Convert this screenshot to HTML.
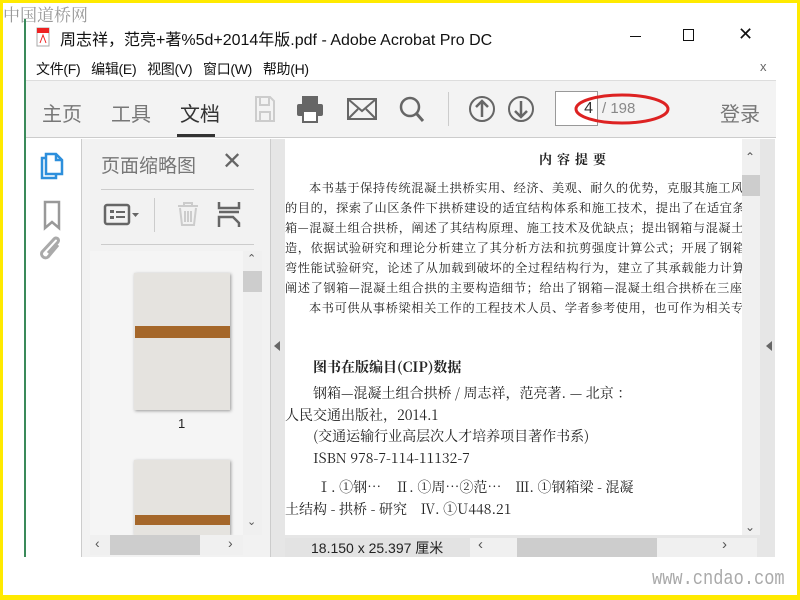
<!DOCTYPE html>
<html><head><meta charset="utf-8"><style>
*{margin:0;padding:0;box-sizing:border-box}
body{width:800px;height:600px;background:#fff;position:relative;overflow:hidden;font-family:"Liberation Sans","Noto Sans CJK SC",sans-serif}
.a{position:absolute}
.cj{font-family:"Noto Serif CJK SC","Liberation Serif",serif;color:#222;white-space:nowrap}
</style></head><body>
<div class="a" style="left:0;top:0;width:800px;height:600px;border:3px solid #ffea00;border-bottom-width:5px"></div>
<div class="a" style="left:3px;top:1px;font-size:17px;color:#999;font-family:'Noto Serif CJK SC',serif">中国道桥网</div>
<div class="a" style="left:24px;top:19px;width:2px;height:538px;background:#3a8a5a"></div>
<svg class="a" style="left:36px;top:27px" width="14" height="20"><rect x="1" y="1" width="12" height="18" fill="#fff" stroke="#aaa"/><rect x="1" y="1" width="12" height="5" fill="#e22"/><path d="M4 16 L7 8 L10 16" stroke="#e22" fill="none"/></svg>
<div class="a" style="left:60px;top:26px;font-size:16px;color:#111">周志祥，范亮+著%5d+2014年版.pdf - Adobe Acrobat Pro DC</div>
<div class="a" style="left:630px;top:36px;width:11px;height:1px;background:#111"></div>
<div class="a" style="left:683px;top:29px;width:11px;height:12px;border:1px solid #111"></div>
<div class="a" style="left:738px;top:24px;font-size:18px;color:#111">✕</div>
<div class="a" style="left:36px;top:59px;font-size:14px;color:#111;letter-spacing:-0.3px">文件(F)&nbsp;&nbsp; 编辑(E)&nbsp;&nbsp; 视图(V)&nbsp;&nbsp; 窗口(W)&nbsp;&nbsp; 帮助(H)</div>
<div class="a" style="left:760px;top:59px;font-size:13px;color:#666">x</div>
<div class="a" style="left:26px;top:80px;width:750px;height:58px;background:#f3f3f3;border-top:1px solid #ddd;border-bottom:1px solid #ccc"></div>
<div class="a" style="left:42px;top:98px;font-size:20px;color:#777">主页</div>
<div class="a" style="left:111px;top:98px;font-size:20px;color:#777">工具</div>
<div class="a" style="left:180px;top:98px;font-size:20px;color:#333">文档</div>
<div class="a" style="left:177px;top:134px;width:38px;height:3px;background:#333"></div>
<svg class="a" style="left:250px;top:95px" width="190" height="30">
<path d="M6 2h14l4 4v20H6z M10 2v8h9V2 M10 26v-9h10v9" fill="none" stroke="#ccc" stroke-width="2"/>
<rect x="52" y="1" width="16" height="8" fill="#666"/><rect x="47" y="9" width="26" height="12" rx="2" fill="#666"/><rect x="53" y="16" width="14" height="11" fill="#fff" stroke="#666" stroke-width="2"/>
<rect x="98" y="4" width="28" height="20" fill="none" stroke="#666" stroke-width="2"/><path d="M98 4l14 12 14-12 M98 24l10-10 M126 24l-10-10" stroke="#666" stroke-width="2" fill="none"/>
<circle cx="160" cy="12" r="9" fill="none" stroke="#666" stroke-width="2.5"/><path d="M166 18l7 8" stroke="#666" stroke-width="3"/>
</svg>
<div class="a" style="left:448px;top:92px;width:1px;height:34px;background:#ccc"></div>
<svg class="a" style="left:468px;top:94px" width="70" height="30"><circle cx="14" cy="15" r="12" fill="none" stroke="#666" stroke-width="2"/><path d="M14 23V8 M8 13l6-6 6 6" stroke="#666" stroke-width="2.5" fill="none"/><circle cx="53" cy="15" r="12" fill="none" stroke="#666" stroke-width="2"/><path d="M53 7v15 M47 17l6 6 6-6" stroke="#666" stroke-width="2.5" fill="none"/></svg>
<div class="a" style="left:555px;top:91px;width:43px;height:35px;background:#fff;border:1px solid #999;font-size:16px;color:#333;text-align:right;padding:8px 4px 0 0">4</div>
<div class="a" style="left:602px;top:100px;font-size:15px;color:#888">/ 198</div>
<svg class="a" style="left:574px;top:92px" width="100" height="36"><ellipse cx="48" cy="17" rx="46" ry="14" fill="none" stroke="#d22" stroke-width="3"/></svg>
<div class="a" style="left:720px;top:98px;font-size:20px;color:#777">登录</div>
<div class="a" style="left:26px;top:139px;width:55px;height:418px;background:#fff"></div>
<svg class="a" style="left:38px;top:152px" width="34" height="120">
<path d="M8 6h-4v20h14v-4 M8 2h10l6 6v14H8z M18 2v6h6" fill="none" stroke="#2d8fdc" stroke-width="2.5"/>
<path d="M7 50h14v26l-7-6-7 6z" fill="none" stroke="#999" stroke-width="2.5"/>
<path d="M20 93l-10 12a4 4 0 0 1-6-5l12-13a2.5 2.5 0 0 1 4 3l-10 11" fill="none" stroke="#aaa" stroke-width="3"/>
</svg>
<div class="a" style="left:81px;top:139px;width:189px;height:418px;background:#f2f2f2;border-left:1px solid #ccc"></div>
<div class="a" style="left:101px;top:151px;font-size:19px;color:#777">页面缩略图</div>
<div class="a" style="left:222px;top:147px;font-size:24px;color:#666">✕</div>
<div class="a" style="left:101px;top:189px;width:153px;height:1px;background:#ccc"></div>
<div class="a" style="left:101px;top:244px;width:153px;height:1px;background:#ccc"></div>
<div class="a" style="left:154px;top:198px;width:1px;height:34px;background:#ccc"></div>
<svg class="a" style="left:102px;top:200px" width="140" height="30"><rect x="3" y="5" width="24" height="19" rx="2" fill="none" stroke="#666" stroke-width="2.5"/><rect x="8" y="10" width="4" height="3" fill="#666"/><rect x="8" y="16" width="4" height="3" fill="#666"/><path d="M14 12h9 M14 17h9" stroke="#666" stroke-width="2"/><path d="M30 13h7l-3.5 4z" fill="#666"/>
<path d="M76 6h20 M82 6V3h8v3 M78 8l2 17h12l2-17 M83 11v11 M86 11v11 M89 11v11" stroke="#ccc" stroke-width="2" fill="none"/>
<path d="M117 2v6h20V2 M117 12h20 M117 27V17h14l6 6v4" stroke="#666" stroke-width="2.5" fill="none"/></svg>
<div class="a" style="left:90px;top:251px;width:153px;height:284px;background:#f5f5f5"></div>
<div class="a" style="left:243px;top:251px;width:19px;height:284px;background:#f0f0f0"></div>
<div class="a" style="left:243px;top:271px;width:19px;height:21px;background:#cdcdcd"></div>
<div class="a" style="left:247px;top:252px;font-size:11px;color:#555">⌃</div>
<div class="a" style="left:247px;top:515px;font-size:11px;color:#555">⌄</div>
<div class="a" style="left:134px;top:273px;width:96px;height:137px;background:#e5e3df;box-shadow:1px 1px 3px #999"></div>
<div class="a" style="left:135px;top:326px;width:95px;height:12px;background:#a5672a"></div>
<div class="a" style="left:178px;top:416px;font-size:13px;color:#222">1</div>
<div class="a" style="left:134px;top:460px;width:96px;height:75px;background:#e5e3df;box-shadow:1px 1px 3px #999"></div>
<div class="a" style="left:135px;top:515px;width:95px;height:10px;background:#a5672a"></div>
<div class="a" style="left:90px;top:535px;width:153px;height:20px;background:#f0f0f0"></div>
<div class="a" style="left:110px;top:535px;width:90px;height:20px;background:#cdcdcd"></div>
<div class="a" style="left:95px;top:535px;font-size:14px;color:#555">‹</div>
<div class="a" style="left:228px;top:535px;font-size:14px;color:#555">›</div>
<div class="a" style="left:270px;top:139px;width:505px;height:418px;background:#e6e6e6;border-left:1px solid #ccc"></div>
<div class="a" style="left:274px;top:341px;width:0;height:0;border:5px solid transparent;border-right:6px solid #666;border-left:0"></div>
<div class="a" style="left:766px;top:341px;width:0;height:0;border:5px solid transparent;border-right:6px solid #666;border-left:0"></div>
<div class="a" style="left:285px;top:139px;width:457px;height:396px;background:#fff;overflow:hidden">
<div class="a cj" style="left:254px;top:10px;font-size:13px;font-weight:bold;letter-spacing:5px">内容提要</div>
<div class="a cj" style="left:0;top:39px;font-size:12.2px;line-height:20px;letter-spacing:0.6px">
<div style="padding-left:24px">本书基于保持传统混凝土拱桥实用、经济、美观、耐久的优势，克服其施工风险</div>
<div>的目的，探索了山区条件下拱桥建设的适宜结构体系和施工技术，提出了在适宜条件</div>
<div>箱—混凝土组合拱桥，阐述了其结构原理、施工技术及优缺点；提出钢箱与混凝土结</div>
<div>造，依据试验研究和理论分析建立了其分析方法和抗剪强度计算公式；开展了钢箱—</div>
<div>弯性能试验研究，论述了从加载到破坏的全过程结构行为，建立了其承载能力计算公</div>
<div>阐述了钢箱—混凝土组合拱的主要构造细节；给出了钢箱—混凝土组合拱桥在三座</div>
<div style="padding-left:24px">本书可供从事桥梁相关工作的工程技术人员、学者参考使用，也可作为相关专业</div>
</div>
<div class="a cj" style="left:28px;top:218px;font-size:14px;font-weight:bold">图书在版编目(CIP)数据</div>
<div class="a cj" style="left:0;top:244px;font-size:14px;line-height:21.5px">
<div style="padding-left:28px">钢箱—混凝土组合拱桥 / 周志祥，范亮著. — 北京 ：</div>
<div>人民交通出版社，2014.1</div>
<div style="padding-left:28px">(交通运输行业高层次人才培养项目著作书系)</div>
<div style="padding-left:28px">ISBN 978-7-114-11132-7</div>
<div style="padding-left:32px;margin-top:8px">Ⅰ. ①钢…　Ⅱ. ①周…②范…　Ⅲ. ①钢箱梁 - 混凝</div>
<div>土结构 - 拱桥 - 研究　Ⅳ. ①U448.21</div>
</div>
</div>
<div class="a" style="left:742px;top:139px;width:18px;height:396px;background:#f0f0f0"></div>
<div class="a" style="left:742px;top:175px;width:18px;height:21px;background:#cdcdcd"></div>
<div class="a" style="left:745px;top:150px;font-size:12px;color:#555">⌃</div>
<div class="a" style="left:745px;top:520px;font-size:12px;color:#555">⌄</div>
<div class="a" style="left:285px;top:538px;width:472px;height:19px;background:#f0f0f0"></div>
<div class="a" style="left:285px;top:538px;width:185px;height:19px;background:#e3e3e3"></div>
<div class="a" style="left:311px;top:538px;font-size:14px;color:#222">18.150 x 25.397 厘米</div>
<div class="a" style="left:517px;top:538px;width:140px;height:19px;background:#cdcdcd"></div>
<div class="a" style="left:478px;top:536px;font-size:15px;color:#555">‹</div>
<div class="a" style="left:722px;top:536px;font-size:15px;color:#555">›</div>
<div class="a" style="left:652px;top:568px;font-size:20px;color:#aaa;font-family:'Liberation Mono',monospace;transform:scaleX(.85);transform-origin:left">www.cndao.com</div>
</body></html>
